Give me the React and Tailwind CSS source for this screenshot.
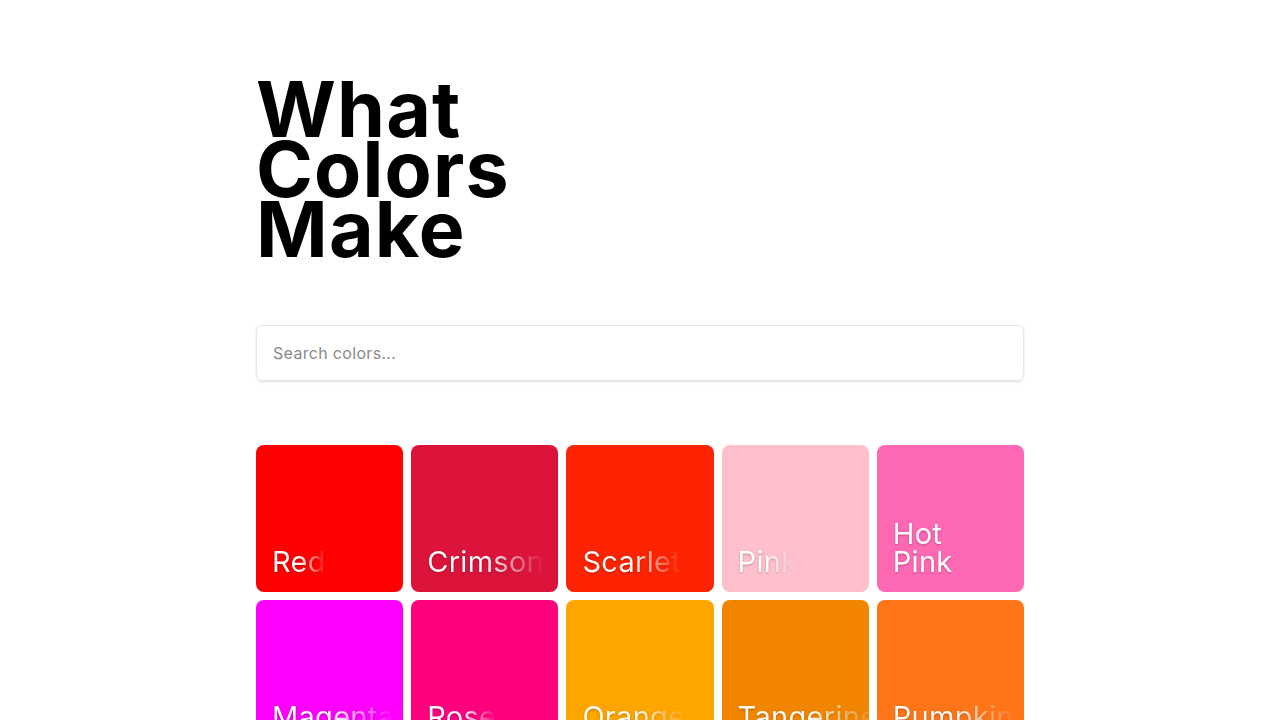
import React, { useState } from 'react';

const colors = [
  { name: 'Red', hex: '#ff0000', fade: true },
  { name: 'Crimson', hex: '#dc143c', fade: true },
  { name: 'Scarlet', hex: '#ff2400', fade: true },
  { name: 'Pink', hex: '#ffc0cb', fade: true },
  { name: 'Hot Pink', hex: '#ff69b4', fade: false },
  { name: 'Magenta', hex: '#ff00ff', fade: true },
  { name: 'Rose', hex: '#ff007f', fade: true },
  { name: 'Orange', hex: '#ffa500', fade: true },
  { name: 'Tangerine', hex: '#f28500', fade: true },
  { name: 'Pumpkin', hex: '#ff7518', fade: true },
];

const ColorCard = ({ color }) => (
  <div
    className="aspect-square rounded-lg flex items-end p-4 pb-[16px]"
    style={{ backgroundColor: color.hex }}
  >
    <span
      className={
        color.fade
          ? 'inline-block w-min text-[29px] leading-[28px] tracking-[0.01em] bg-gradient-to-r from-white from-50% to-white/0 bg-clip-text text-transparent drop-shadow-[0_1px_1px_rgba(0,0,0,0.25)]'
          : 'inline-block w-min text-[29px] leading-[28px] tracking-[0.01em] text-white drop-shadow-[0_1px_1px_rgba(0,0,0,0.25)]'
      }
    >
      {color.name}
    </span>
  </div>
);

export default function App() {
  const [query, setQuery] = useState('');
  const shown = colors.filter((c) => c.name.toLowerCase().includes(query.toLowerCase()));

  return (
    <div className="min-h-screen bg-white font-['Inter',sans-serif]">
      <div className="max-w-3xl mx-auto pt-[79px]">
        {/* Title */}
        <h1 className="text-[77px] leading-[60px] font-bold tracking-[0.015em] text-black w-min">
          What Colors Make
        </h1>

        {/* Search */}
        <div className="mt-[66px]">
          <input
            type="text"
            value={query}
            onChange={(e) => setQuery(e.target.value)}
            placeholder="Search colors..."
            className="w-full h-[56px] px-4 rounded-md border border-[#e5e5e5] shadow-sm text-base tracking-[0.02em] text-neutral-700 placeholder:text-[#8a8a8a] outline-none"
          />
        </div>

        {/* Grid */}
        <div className="mt-16 grid grid-cols-5 gap-2">
          {shown.map((c) => (
            <ColorCard key={c.name} color={c} />
          ))}
        </div>
      </div>
    </div>
  );
}
